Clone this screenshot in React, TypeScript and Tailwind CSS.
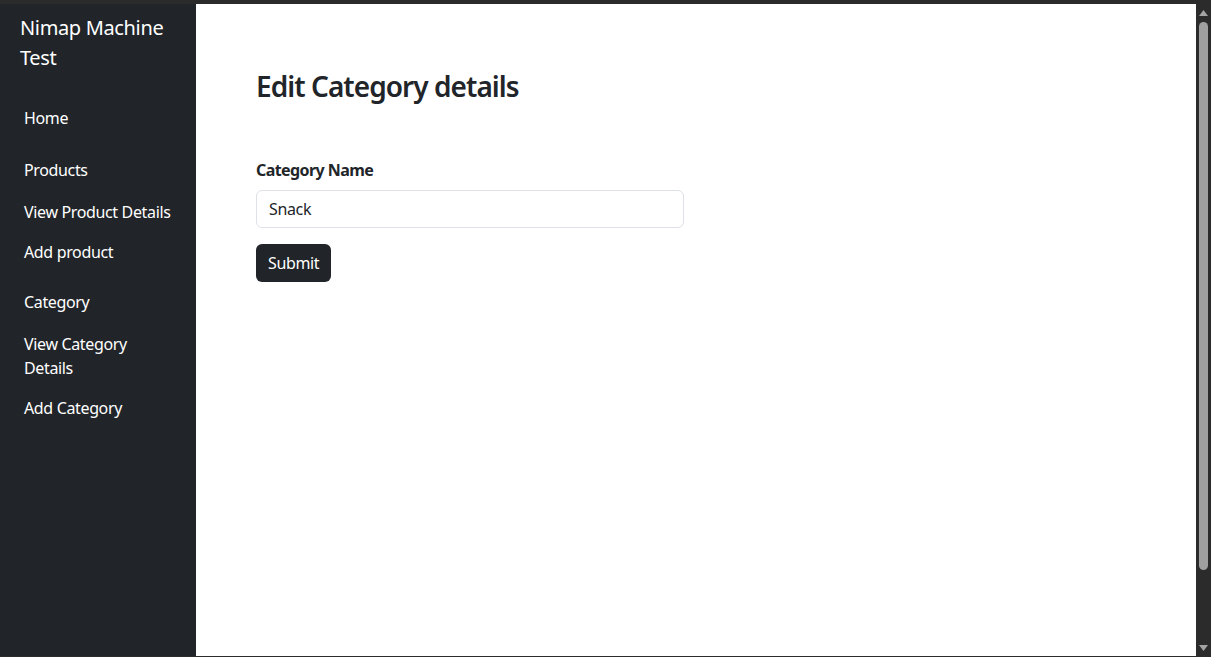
import React from 'react';

const font = { fontFamily: '"Segoe UI", "Noto Sans", "Open Sans", sans-serif' };

const Sidebar = () => {
  return (
    <aside className="w-[196px] shrink-0 bg-[#212529] text-white tracking-[-0.022em]">
      <h5 className="pl-5 pt-[9px] pr-4 text-[20px] leading-[30px]">Nimap Machine Test</h5>
      <nav className="flex flex-col pl-6 pr-4 text-[16px] leading-6">
        <a className="mt-[33px]">Home</a>
        <a className="mt-[28px]">Products</a>
        <a className="mt-[18px]">View Product Details</a>
        <a className="mt-[16px]">Add product</a>
        <a className="mt-[26px]">Category</a>
        <a className="mt-[18px] pr-10">View Category Details</a>
        <a className="mt-[16px]">Add Category</a>
      </nav>
    </aside>
  );
};

const Scrollbar = () => {
  return (
    <div className="flex w-[15px] shrink-0 flex-col items-center bg-[#2b2b2b] pt-[6px] pb-[5px]">
      <svg width="9" height="6" viewBox="0 0 9 6" className="mb-[6px]">
        <path d="M4.5 0 L9 6 L0 6 Z" fill="#a3a3a3" />
      </svg>
      <div className="w-[9px] flex-1 rounded-full bg-[#9f9f9f] mb-[75px]" />
      <svg width="9" height="6" viewBox="0 0 9 6">
        <path d="M0 0 L9 0 L4.5 6 Z" fill="#a3a3a3" />
      </svg>
    </div>
  );
};

export default function App() {
  return (
    <div className="flex h-[657px] flex-col bg-[#2b2b2b] pt-1 pb-px" style={font}>
      <div className="flex flex-1">
        <Sidebar />
        <main className="flex-1 bg-white px-[60px] text-[#212529] tracking-[-0.022em]">
          <h3 className="mt-[66px] text-[28px] font-semibold leading-[1.2] tracking-[-0.034em]">
            Edit Category details
          </h3>
          <form className="mt-[54px] w-[428px]">
            <label className="block text-[16px] font-bold leading-6 tracking-[-0.036em]">Category Name</label>
            <input
              defaultValue="Snack"
              className="mt-2 block h-[38px] w-full rounded-[6px] border border-[#dee2e6] px-3 text-[16px] text-[#212529] outline-none"
            />
            <button
              type="button"
              className="mt-4 h-[38px] rounded-[6px] bg-[#212529] px-3 text-[16px] text-white"
            >
              Submit
            </button>
          </form>
        </main>
        <Scrollbar />
      </div>
    </div>
  );
}
